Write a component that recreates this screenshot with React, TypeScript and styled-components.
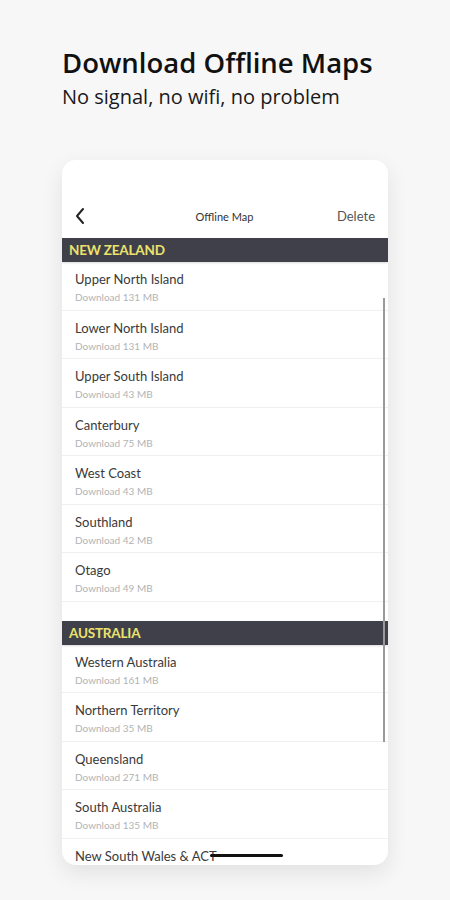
import React from 'react';
import styled, { createGlobalStyle } from 'styled-components';

const GlobalStyle = createGlobalStyle`
  html, body {
    margin: 0;
    padding: 0;
    background: #f7f7f7;
  }
  * {
    box-sizing: border-box;
  }
`;

const Page = styled.div`
  width: 450px;
  height: 900px;
  overflow: hidden;
  background: #f7f7f7;
  padding: 46px 0 0 62px;
`;

const Heading = styled.h1`
  margin: 0;
  font-family: 'Open Sans', 'Noto Sans', sans-serif;
  font-weight: 600;
  font-size: 27.5px;
  line-height: 34px;
  color: #111;
`;

const SubHeading = styled.p`
  margin: 3px 0 0;
  font-family: 'Open Sans', 'Noto Sans', sans-serif;
  font-weight: 400;
  font-size: 20px;
  line-height: 28px;
  color: #1a1a1a;
`;

const Phone = styled.div`
  position: relative;
  margin-top: 49px;
  width: 326px;
  height: 705px;
  background: #fff;
  border-radius: 14px;
  overflow: hidden;
  box-shadow: 0 8px 22px rgba(0, 0, 0, 0.09);
  padding-top: 34px;
  font-family: 'Lato', 'Noto Sans', sans-serif;
`;

const NavBar = styled.div`
  display: grid;
  grid-template-columns: 60px 1fr 60px;
  align-items: center;
  height: 44px;
  padding: 0 13px 0 12px;
`;

const BackButton = styled.div`
  display: flex;
  align-items: center;
`;

const NavTitle = styled.div`
  text-align: center;
  font-size: 11px;
  color: #333;
`;

const NavAction = styled.div`
  text-align: right;
  font-size: 13px;
  color: #555;
`;

const SectionHeader = styled.div`
  height: 24px;
  display: flex;
  align-items: center;
  padding-left: 7px;
  background: #40404b;
  color: #ece26c;
  font-weight: 700;
  font-size: 13.5px;
  letter-spacing: -0.2px;
  box-shadow: 0 1px 2px rgba(0, 0, 0, 0.15);
`;

const Row = styled.div`
  height: 48.5px;
  padding: 9px 0 0 13px;
  border-bottom: 1px solid #f0f0f0;
`;

const RowTitle = styled.div`
  font-size: 13px;
  line-height: 16px;
  color: #3a3a3a;
`;

const RowSub = styled.div`
  margin-top: 4px;
  font-size: 10px;
  line-height: 13px;
  color: #b3b3b3;
`;

const Spacer = styled.div`
  height: 19px;
`;

const ScrollBar = styled.div`
  position: absolute;
  left: 321px;
  top: 138px;
  width: 2px;
  height: 444px;
  background: #9a9a9a;
`;

const HomeIndicator = styled.div`
  position: absolute;
  left: 148px;
  top: 694px;
  width: 73px;
  height: 3px;
  border-radius: 2px;
  background: #111;
`;

const nz: [string, string][] = [
  ['Upper North Island', '131'],
  ['Lower North Island', '131'],
  ['Upper South Island', '43'],
  ['Canterbury', '75'],
  ['West Coast', '43'],
  ['Southland', '42'],
  ['Otago', '49'],
];

// last entry is cut off by the screen edge, only its name shows
const au: [string, string?][] = [
  ['Western Australia', '161'],
  ['Northern Territory', '35'],
  ['Queensland', '271'],
  ['South Australia', '135'],
  ['New South Wales & ACT'],
];

const Region: React.FC<{ name: string; size?: string }> = ({ name, size }) => (
  <Row>
    <RowTitle>{name}</RowTitle>
    {size && <RowSub>Download {size} MB</RowSub>}
  </Row>
);

const App: React.FC = () => (
  <>
    <GlobalStyle />
    <Page>
      <Heading>Download Offline Maps</Heading>
      <SubHeading>No signal, no wifi, no problem</SubHeading>
      <Phone>
        <NavBar>
          <BackButton>
            <svg width="12" height="18" viewBox="0 0 12 18">
              <path d="M9 2 L3 9 L9 16" fill="none" stroke="#222" strokeWidth="2" strokeLinecap="round" strokeLinejoin="round" />
            </svg>
          </BackButton>
          <NavTitle>Offline Map</NavTitle>
          <NavAction>Delete</NavAction>
        </NavBar>
        <SectionHeader>NEW ZEALAND</SectionHeader>
        {nz.map(([n, s]) => (
          <Region key={n} name={n} size={s} />
        ))}
        <Spacer />
        <SectionHeader>AUSTRALIA</SectionHeader>
        {au.map(([n, s]) => (
          <Region key={n} name={n} size={s} />
        ))}
        <ScrollBar />
        <HomeIndicator />
      </Phone>
    </Page>
  </>
);

export default App;
